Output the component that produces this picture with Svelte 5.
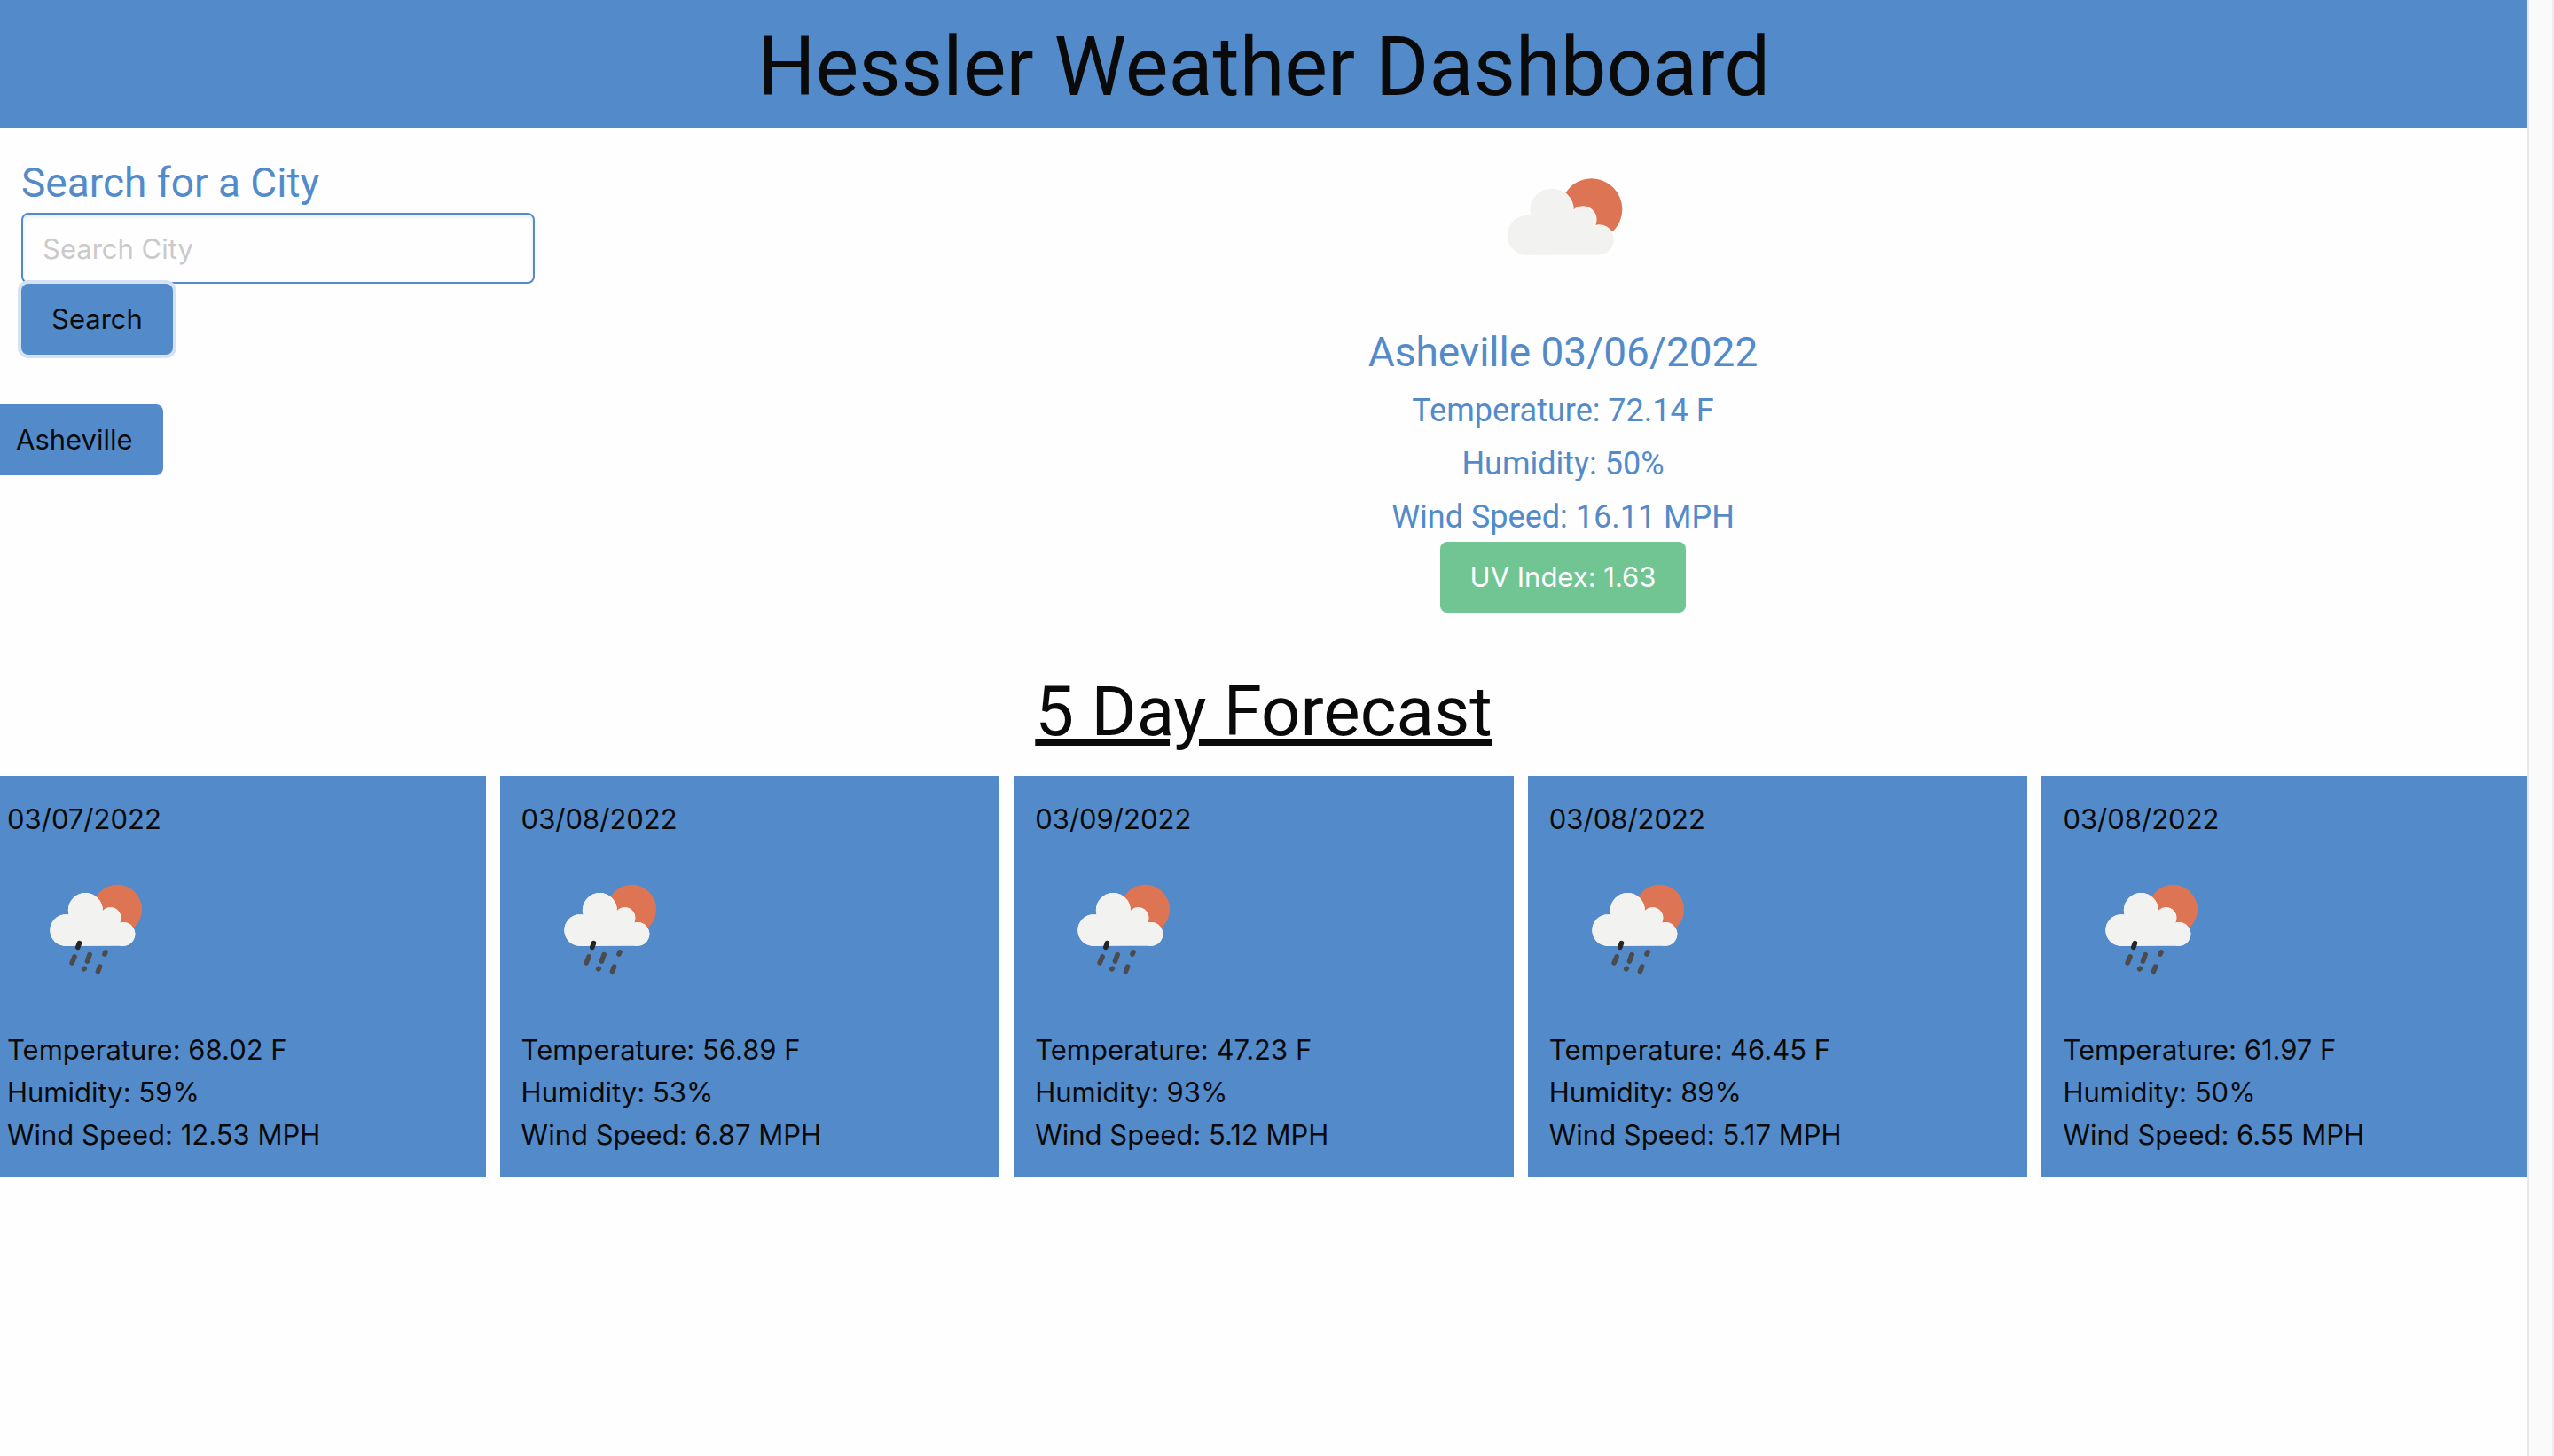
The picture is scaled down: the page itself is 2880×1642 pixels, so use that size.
<script>
  let query = $state('');
  let history = $state(['Asheville']);

  const current = [
    'Temperature: 72.14 F',
    'Humidity: 50%',
    'Wind Speed: 16.11 MPH'
  ];

  const forecast = [
    { date: '03/07/2022', temp: '68.02', humidity: 59, wind: '12.53' },
    { date: '03/08/2022', temp: '56.89', humidity: 53, wind: '6.87' },
    { date: '03/09/2022', temp: '47.23', humidity: 93, wind: '5.12' },
    { date: '03/08/2022', temp: '46.45', humidity: 89, wind: '5.17' },
    { date: '03/08/2022', temp: '61.97', humidity: 50, wind: '6.55' }
  ];

  function search(event) {
    event.preventDefault();
    const city = query.trim();
    if (city && !history.includes(city)) history.push(city);
    query = '';
  }
</script>

{#snippet weatherIcon(rain)}
  <svg class="icon" class:small={rain} viewBox="-53 -48 600 600" aria-hidden="true">
    <circle cx="342" cy="168" r="104" fill="#dd7554" />
    <g class="edge" class:snow={rain}>
      <circle cx="124" cy="256" r="67" />
      <circle cx="207" cy="171" r="73" />
      <circle cx="313" cy="203" r="44" />
      <circle cx="367" cy="272" r="50" />
    </g>
    <g class="cloud">
      <circle cx="124" cy="256" r="67" />
      <circle cx="207" cy="171" r="73" />
      <circle cx="313" cy="203" r="44" />
      <circle cx="367" cy="272" r="50" />
      <path d="M124 323V250L207 150L313 203L367 250V322Z" />
    </g>
    {#if rain}
      <g class="rain">
        <path d="M150 394L161 368M215 387L225 359M288 357L292 349M201 420L203 418M260 430L268 410" />
        <path class="dark" d="M175 328L181 311" />
      </g>
    {/if}
  </svg>
{/snippet}

<div class="page">
  <div class="content">
    <header><h1>Hessler Weather Dashboard</h1></header>

    <div class="top">
      <aside>
        <form onsubmit={search}>
          <label for="city">Search for a City</label>
          <input id="city" type="text" placeholder="Search City" bind:value={query} />
          <button class="button focused" type="submit">Search</button>
        </form>
        <div class="history">
          {#each history as city}
            <button class="button" type="button">{city}</button>
          {/each}
        </div>
      </aside>

      <section class="current">
        {@render weatherIcon(false)}
        <h3>Asheville 03/06/2022</h3>
        {#each current as line}
          <p>{line}</p>
        {/each}
        <button class="button uv" type="button">UV Index: 1.63</button>
      </section>
    </div>

    <h2>5 Day Forecast</h2>

    <section class="forecast">
      {#each forecast as day}
        <article>
          <p>{day.date}</p>
          {@render weatherIcon(true)}
          <p>Temperature: {day.temp} F</p>
          <p>Humidity: {day.humidity}%</p>
          <p>Wind Speed: {day.wind} MPH</p>
        </article>
      {/each}
    </section>
  </div>
  <div class="track"></div>
</div>

<style>
  :global(body) {
    margin: 0;
    background: #fefefe;
  }

  .page {
    --blue: #538bca;
    --ink: #0a0a0a;
    display: flex;
    min-height: 100vh;
    font-family: Inter, "Liberation Sans", sans-serif;
    font-size: 31px;
    line-height: 48px;
    color: var(--ink);
  }

  .content {
    flex: 1;
    min-width: 0;
    overflow: hidden;
  }

  .track {
    flex: none;
    box-sizing: border-box;
    width: 30px;
    background: #fafafa;
    border-left: 2px solid #e8e8e8;
    border-right: 2px solid #ededed;
  }

  h1,
  h2,
  h3,
  p {
    margin: 0;
    font-weight: 400;
  }

  h1,
  h2,
  h3,
  label,
  .current p {
    font-family: Roboto, "Liberation Sans", sans-serif;
  }

  header {
    padding-top: 8px;
    background: var(--blue);
    text-align: center;
  }

  h1 {
    font-size: 92px;
    line-height: 136px;
  }

  .top {
    display: flex;
  }

  aside {
    flex: none;
    box-sizing: border-box;
    width: 675px;
    padding: 28px 72px 0 24px;
  }

  form {
    display: flex;
    flex-direction: column;
    align-items: flex-start;
  }

  label {
    font-size: 46px;
    line-height: 68px;
    color: var(--blue);
  }

  input {
    box-sizing: border-box;
    width: 100%;
    height: 80px;
    padding: 0 22px;
    border: 2px solid var(--blue);
    border-radius: 8px;
    background: #fefefe;
    box-shadow: inset 0 2px 4px rgba(10, 10, 10, 0.1);
    font: inherit;
    color: var(--ink);
  }

  input::placeholder {
    color: #cacaca;
    opacity: 1;
  }

  .button {
    height: 80px;
    padding: 0 34px;
    border: 0;
    border-radius: 8px;
    background: var(--blue);
    font: inherit;
    color: var(--ink);
  }

  .focused {
    box-shadow: 0 0 0 4px #d4e2f2;
  }

  .history {
    display: flex;
    flex-direction: column;
    align-items: flex-start;
    gap: 16px;
    margin: 56px 0 0 -40px;
  }

  .current {
    flex: 1;
    display: flex;
    flex-direction: column;
    align-items: center;
    padding-top: 20px;
    color: var(--blue);
  }

  .current h3 {
    font-size: 46px;
    line-height: 67px;
  }

  .current p {
    padding-top: 4px;
    font-size: 36px;
    line-height: 56px;
  }

  .uv {
    background: #70c593;
    color: #fefefe;
  }

  h2 {
    margin: 56px 0 16px;
    font-size: 78px;
    line-height: 112px;
    text-align: center;
    text-decoration: underline;
    text-decoration-thickness: 8px;
    text-underline-offset: 4px;
  }

  .forecast {
    display: grid;
    grid-template-columns: repeat(5, 1fr);
    gap: 16px;
    margin: 0 -16px;
  }

  article {
    padding: 25px 24px 23px;
    background: var(--blue);
  }

  .icon {
    display: block;
    width: 200px;
    height: 200px;
  }

  .icon.small {
    width: 160px;
    height: 160px;
    margin: 20px 19px 32px;
  }

  .cloud {
    fill: #f2f2f1;
  }

  .edge {
    fill: #fefefe;
    stroke: #fefefe;
    stroke-width: 5;
  }

  .edge.snow {
    fill: #f2f2f2;
    stroke: none;
  }

  .rain {
    fill: none;
    stroke: #4b4b4d;
    stroke-width: 21;
    stroke-linecap: round;
  }

  .dark {
    stroke: #262626;
  }
</style>
